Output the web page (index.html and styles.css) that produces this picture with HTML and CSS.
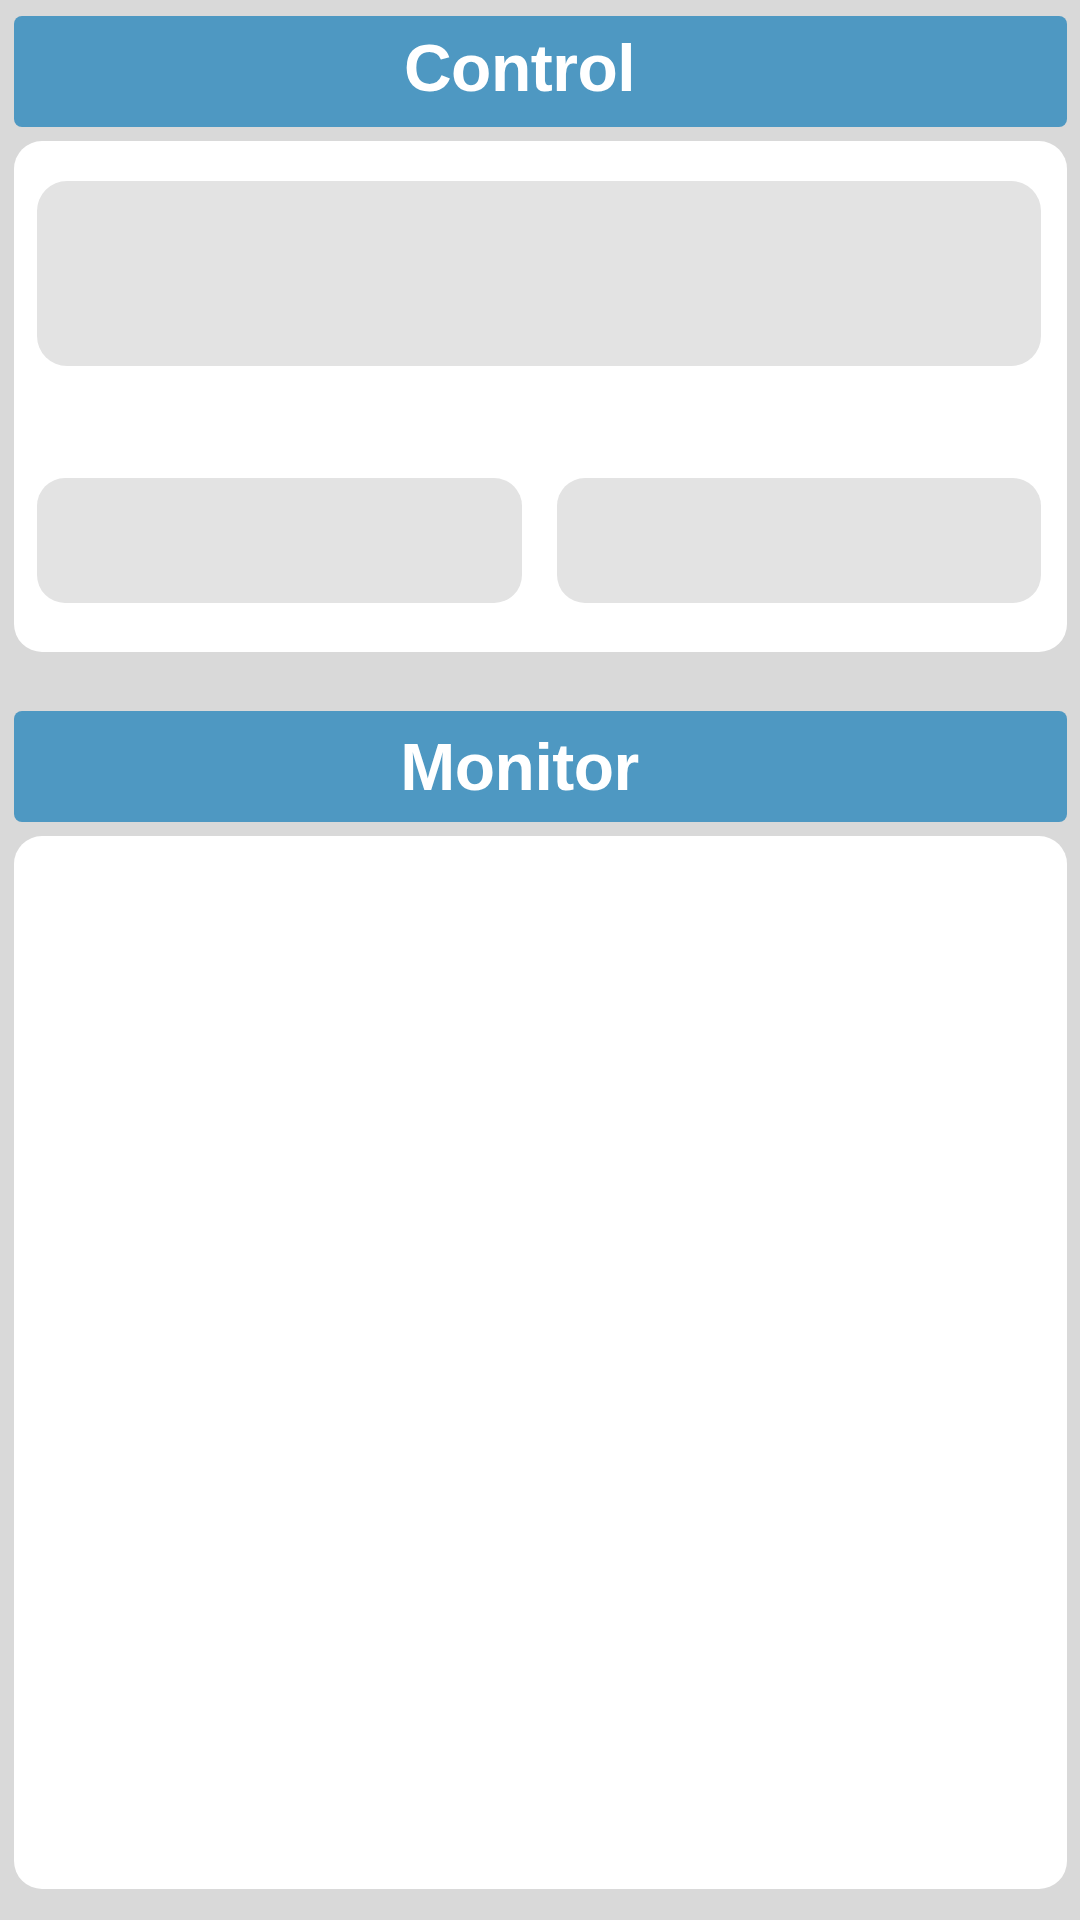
FILE: index.html
```html
<!DOCTYPE html>
<html lang="en">
<head>
<meta charset="utf-8">
<title>Control / Monitor</title>
<link rel="stylesheet" href="styles.css">
</head>
<body>
<main class="page">
  <section class="section section-control">
    <header class="section-header"><h1 class="section-title">Control</h1></header>
    <div class="card card-control">
      <div class="slot slot-wide"></div>
      <div class="slot-row">
        <div class="slot slot-half"></div>
        <div class="slot slot-half"></div>
      </div>
    </div>
  </section>
  <section class="section section-monitor">
    <header class="section-header section-header-monitor"><h1 class="section-title">Monitor</h1></header>
    <div class="card card-monitor"></div>
  </section>
</main>
</body>
</html>
```
FILE: styles.css
```css
html, body {
  margin: 0;
  padding: 0;
  background: #d9d9d9;
}
body {
  width: 1080px;
  height: 1920px;
  overflow: hidden;
  font-family: "Liberation Sans", Arial, sans-serif;
}
.page {
  display: flex;
  flex-direction: column;
  padding: 16px 13px 0 14px;
  gap: 59px;
}
.section {
  display: flex;
  flex-direction: column;
  gap: 14px;
}
.section-header {
  height: 111px;
  box-sizing: border-box;
  background: #4e98c2;
  border-radius: 8px;
  display: flex;
  align-items: center;
  justify-content: center;
  padding: 0 42px 8px 0;
}
.section-header-monitor {
  padding-bottom: 0;
}
.section-title {
  margin: 0;
  color: #ffffff;
  font-family: "Liberation Sans", Arial, sans-serif;
  font-weight: 700;
  font-size: 66px;
  line-height: 76px;
  letter-spacing: -0.5px;
}
.card {
  background: #ffffff;
  border-radius: 28px;
}
.card-control {
  height: 511px;
  box-sizing: border-box;
  padding: 40px 26px 0 23px;
  display: flex;
  flex-direction: column;
  gap: 112px;
}
.slot {
  background: #e3e3e3;
}
.slot-wide {
  height: 185px;
  border-radius: 30px;
}
.slot-row {
  display: grid;
  grid-template-columns: 1fr 1fr;
  gap: 35px;
}
.slot-half {
  height: 125px;
  border-radius: 28px;
}
.card-monitor {
  height: 1053px;
}
```
